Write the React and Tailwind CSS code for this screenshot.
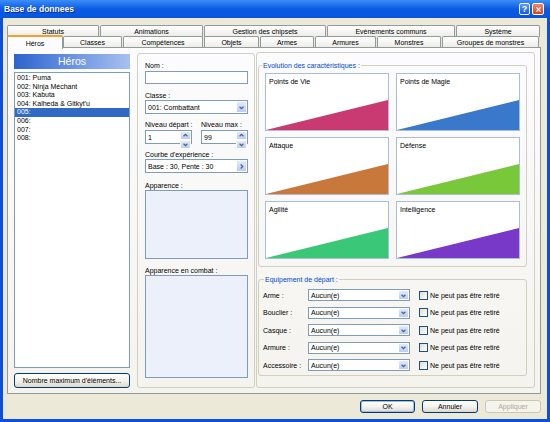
import React from 'react';

const rowOne = [
  { label: 'Statuts', w: 'w-[92px]' },
  { label: 'Animations', w: 'w-[103px]' },
  { label: 'Gestion des chipsets', w: 'w-[122px]' },
  { label: 'Evènements communs', w: 'w-[128px]' },
  { label: 'Système', w: 'w-[84px]' },
];

const rowTwo = [
  { label: 'Héros', w: 'w-[56px]', active: true },
  { label: 'Classes', w: 'w-[59px]' },
  { label: 'Compétences', w: 'w-[80px]' },
  { label: 'Objets', w: 'w-[55px]' },
  { label: 'Armes', w: 'w-[54px]' },
  { label: 'Armures', w: 'w-[61px]' },
  { label: 'Monstres', w: 'w-[64px]' },
  { label: 'Groupes de monstres', w: 'w-[97px]' },
];

const heroes = ['001: Puma', '002: Ninja Méchant', '003: Kabuta', '004: Kalheda & Gitkyt\'u', '005:', '006:', '007:', '008:'];

// graph colours
const stats = [
  { label: 'Points de Vie', color: '#c93a72' },
  { label: 'Points de Magie', color: '#3a78cc' },
  { label: 'Attaque', color: '#c8783a' },
  { label: 'Défense', color: '#78c83a' },
  { label: 'Agilité', color: '#3ac878' },
  { label: 'Intelligence', color: '#7838c8' },
];

const equipment = ['Arme :', 'Bouclier :', 'Casque :', 'Armure :', 'Accessoire :'];

function Tab({ label, w, active }) {
  if (active) {
    return (
      <div className={`${w} h-[14px] -mb-px relative z-10 flex items-center justify-center bg-[#fcfcfe] border-x border-[#919b9c] border-t-2 border-t-[#f2a12e] rounded-t-[2px]`}>
        {label}
      </div>
    );
  }
  return (
    <div className={`${w} h-[12px] mr-px flex items-center justify-center bg-linear-to-b from-white to-[#ecebe6] border-x border-t border-[#919b9c] rounded-t-[2px]`}>
      {label}
    </div>
  );
}

function Chevron({ dir = 'down' }) {
  const d = {
    down: 'M2 3.5 L4.5 6 L7 3.5',
    up: 'M2 5.5 L4.5 3 L7 5.5',
    right: 'M3.5 2 L6 4.5 L3.5 7',
  }[dir];
  return (
    <svg viewBox="0 0 9 9" className="w-[7px] h-[7px]">
      <path d={d} fill="none" stroke="#4d6185" strokeWidth="1.6" />
    </svg>
  );
}

function ArrowButton({ dir }) {
  return (
    <div className="w-[11px] h-full flex items-center justify-center bg-linear-to-b from-[#e3ebfd] to-[#b9ccf5] border border-white rounded-[1px]">
      <Chevron dir={dir} />
    </div>
  );
}

function Select({ value, h = 'h-[14px]', w = 'w-[103px]', dir = 'down' }) {
  return (
    <div className={`${w} ${h} flex items-stretch bg-white border border-[#7f9db9]`}>
      <div className="flex-1 flex items-center pl-[2px] whitespace-nowrap">{value}</div>
      <ArrowButton dir={dir} />
    </div>
  );
}

function Spin({ value }) {
  return (
    <div className="w-[47px] h-[14px] flex items-stretch bg-white border border-[#7f9db9]">
      <div className="flex-1 flex items-center pl-[2px]">{value}</div>
      <div className="w-[11px] flex flex-col">
        <div className="flex-1 flex items-center justify-center bg-linear-to-b from-[#e3ebfd] to-[#b9ccf5] border border-white rounded-[1px]">
          <Chevron dir="up" />
        </div>
        <div className="flex-1 flex items-center justify-center bg-linear-to-b from-[#e3ebfd] to-[#b9ccf5] border border-white rounded-[1px]">
          <Chevron dir="down" />
        </div>
      </div>
    </div>
  );
}

function Graph({ label, color }) {
  return (
    <div className="w-[124px] h-[58px] relative bg-white border border-[#a9bdd6]">
      <svg viewBox="0 0 122 56" preserveAspectRatio="none" className="absolute inset-0 w-full h-full">
        <polygon points="0,56 122,56 122,26" fill={color} />
      </svg>
      <div className="relative pl-[3px] pt-[3px]">{label}</div>
    </div>
  );
}

function XPButton({ children, className = '', disabled }) {
  return (
    <div
      className={`flex items-center justify-center rounded-[3px] border ${
        disabled
          ? 'border-[#c9c7ba] bg-[#f5f4ea] text-[#aca899]'
          : 'border-[#003c74] bg-linear-to-b from-white via-[#f4f3ee] to-[#dcd8cb]'
      } ${className}`}
    >
      {children}
    </div>
  );
}

export default function App() {
  return (
    <div className="w-[550px] h-[422px] flex flex-col bg-[#0b4fdc] text-[7px] leading-[9px] text-black font-['Liberation_Sans','Arial',sans-serif]">
      {/* Title bar */}
      <div className="h-[18px] flex items-center justify-between pl-[4px] pr-[6px] bg-linear-to-b from-[#3c8ef7] via-[#0a5ae4] to-[#0856df]">
        <span className="text-white font-bold text-[8.5px] [text-shadow:1px_1px_0_#0a2a8a]">Base de donnees</span>
        <div className="flex gap-[2px]">
          <div className="w-[11px] h-[12px] rounded-[2px] border border-white bg-linear-to-b from-[#5d9bff] to-[#1856dc] flex items-center justify-center text-white font-bold text-[9px]">?</div>
          <div className="w-[12px] h-[12px] rounded-[2px] border border-white bg-linear-to-b from-[#f2866a] to-[#d8441f] flex items-center justify-center">
            <svg viewBox="0 0 10 10" className="w-[7px] h-[7px]">
              <path d="M2 2 L8 8 M8 2 L2 8" stroke="white" strokeWidth="1.8" />
            </svg>
          </div>
        </div>
      </div>

      {/* Window body */}
      <div className="flex-1 mx-[3px] mb-[3px] bg-[#ece9d8] flex flex-col">
        <div className="mt-[7px] ml-[4px] flex flex-col">
          <div className="flex h-[12px]">
            {rowOne.map((t) => (
              <Tab key={t.label} {...t} />
            ))}
          </div>
          <div className="flex items-end h-[12px] -mt-px">
            {rowTwo.map((t) => (
              <Tab key={t.label} {...t} />
            ))}
          </div>
        </div>

        {/* Tab panel */}
        <div className="ml-[4px] -mt-px w-[534px] h-[347px] border border-[#919b9c] bg-linear-to-b from-[#fcfcfe] to-[#f4f3ee] flex pt-[5px] pl-[6px]">
          {/* Hero list */}
          <div className="w-[116px] flex flex-col">
            <div className="mt-px h-[15px] flex items-center justify-center bg-linear-to-r from-[#2d63d0] to-[#a7c0f0] text-white text-[10.5px]">
              Héros
            </div>
            <div className="mt-[3px] h-[296px] bg-white border border-[#7f9db9] pt-px">
              {heroes.map((h, i) => (
                <div key={h} className={`h-[8.6px] leading-[8.6px] pl-[2px] ${i === 4 ? 'bg-[#316ac5] text-white' : ''}`}>
                  {h}
                </div>
              ))}
            </div>
            <XPButton className="mt-[5px] h-[15px]">Nombre maximum d'éléments...</XPButton>
          </div>

          {/* Middle box */}
          <div className="ml-[7px] w-[118px] h-[335px] border border-[#d0d0bf] rounded-[3px] pt-[7px] pl-[7px] flex flex-col">
            <div>Nom :</div>
            <div className="mt-px w-[103px] h-[13px] bg-white border border-[#7f9db9]" />
            <div className="mt-[7px]">Classe :</div>
            <Select value="001: Combattant" />
            <div className="mt-[6px] flex gap-[9px]">
              <div className="w-[47px] whitespace-nowrap">Niveau départ :</div>
              <div className="w-[47px] whitespace-nowrap">Niveau max :</div>
            </div>
            <div className="mt-px flex gap-[9px]">
              <Spin value="1" />
              <Spin value="99" />
            </div>
            <div className="mt-[6px]">Courbe d'expérience :</div>
            <Select value="Base : 30, Pente : 30" dir="right" />
            <div className="mt-[8px]">Apparence :</div>
            <div className="w-[103px] h-[69px] bg-[#ebf0fb] border border-[#7f9db9]" />
            <div className="mt-[7px]">Apparence en combat :</div>
            <div className="w-[103px] h-[103px] bg-[#ebf0fb] border border-[#7f9db9]" />
          </div>

          {/* Right box */}
          <div className="ml-px -mt-px w-[279px] h-[336px] border border-[#d0d0bf] rounded-[3px] pl-px flex flex-col">
            <fieldset className="mt-[8px] w-[269px] border border-[#d0d0bf] rounded-[3px] px-[6px] pt-[3px] pb-[7px]">
              <legend className="ml-[-3px] px-px text-[#0046d5]">Evolution des caractéristiques :</legend>
              <div className="grid grid-cols-2 gap-x-[7px] gap-y-[6px]">
                {stats.map((s) => (
                  <Graph key={s.label} {...s} />
                ))}
              </div>
            </fieldset>

            <fieldset className="mt-[8px] w-[269px] border border-[#d0d0bf] rounded-[3px] pl-[4px] pt-[5px] pb-[4px]">
              <legend className="ml-[1px] px-px text-[#0046d5]">Equipement de départ :</legend>
              <div className="flex flex-col gap-[5.5px]">
                {equipment.map((e) => (
                  <div key={e} className="flex items-center h-[12px]">
                    <div className="w-[45px]">{e}</div>
                    <Select value="Aucun(e)" h="h-[12px]" w="w-[102px]" />
                    <div className="ml-[9px] w-[9px] h-[9px] border border-[#1c5180] bg-linear-to-br from-[#dcdcd6] to-white" />
                    <div className="ml-[2px] whitespace-nowrap">Ne peut pas être retiré</div>
                  </div>
                ))}
              </div>
            </fieldset>
          </div>
        </div>

        {/* Dialog buttons */}
        <div className="mt-[6px] flex justify-end gap-[7px] pr-[6px]">
          <XPButton className="w-[55px] h-[13px] shadow-[inset_0_0_0_1px_#9fbcec]">OK</XPButton>
          <XPButton className="w-[56px] h-[13px]">Annuler</XPButton>
          <XPButton className="w-[56px] h-[13px]" disabled>Appliquer</XPButton>
        </div>
      </div>
    </div>
  );
}
